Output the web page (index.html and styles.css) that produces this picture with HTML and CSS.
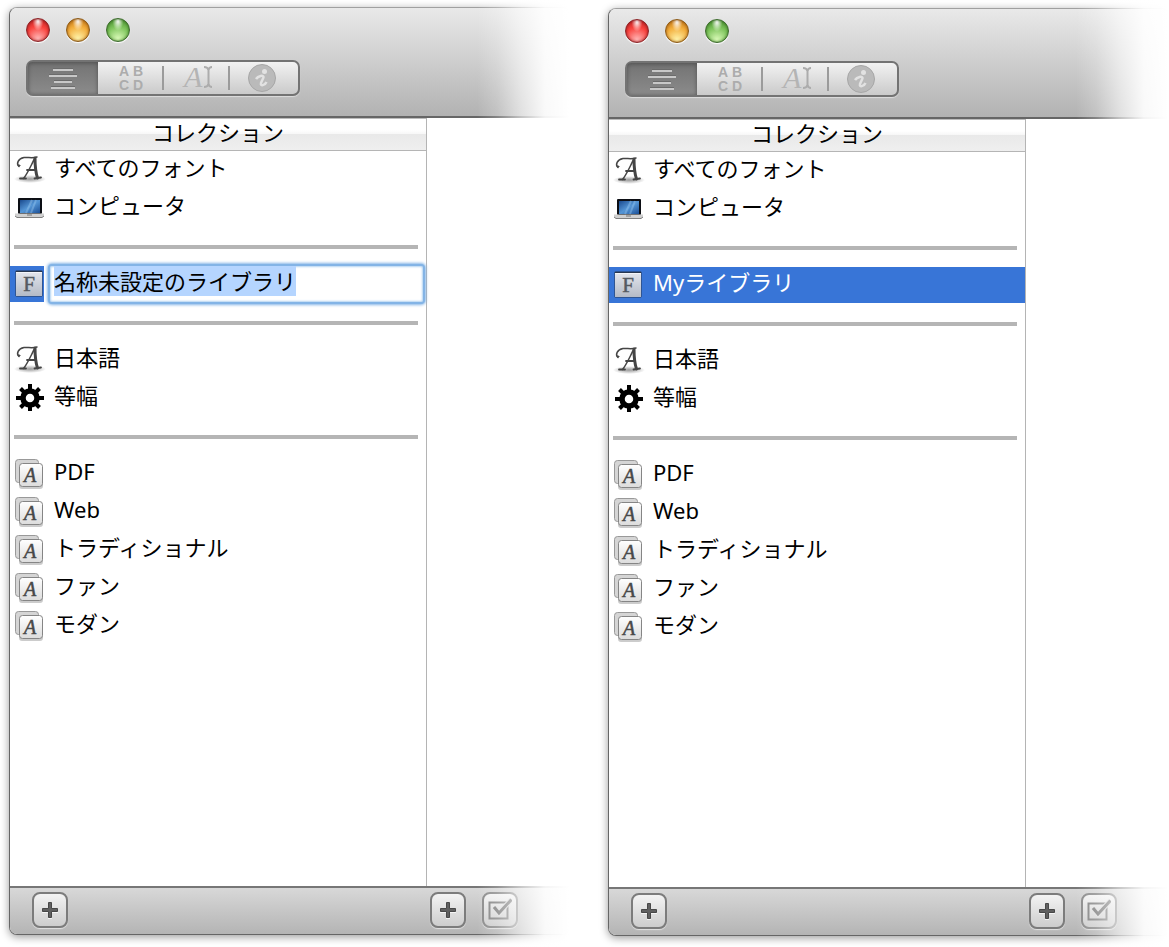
FILE: index.html
```html
<!DOCTYPE html>
<html lang="ja">
<head>
<meta charset="utf-8">
<title>コレクション</title>
<meta name="viewport" content="width=device-width, initial-scale=1">
<link rel="stylesheet" href="styles.css">
</head>
<body>
<svg class="defs" aria-hidden="true">
  <defs>
    <linearGradient id="paper" x1="0" y1="0" x2="0" y2="1"><stop offset="0" stop-color="#fff"/><stop offset="1" stop-color="#dcdcdc"/></linearGradient>
    <linearGradient id="steel" x1="0" y1="0" x2="0" y2="1"><stop offset="0" stop-color="#e2e5ec"/><stop offset="1" stop-color="#b4bac6"/></linearGradient>
    <linearGradient id="screen" x1="0" y1="0" x2="1" y2="1"><stop offset="0" stop-color="#1a4a8e"/><stop offset=".5" stop-color="#5596d6"/><stop offset="1" stop-color="#1c5097"/></linearGradient>
    <radialGradient id="ground"><stop offset="0" stop-color="#000" stop-opacity=".4"/><stop offset="1" stop-color="#000" stop-opacity="0"/></radialGradient>
  </defs>
  <symbol id="script-a" viewBox="0 0 28 28" overflow="visible">
    <ellipse cx="15" cy="23" rx="16" ry="4" fill="url(#ground)"/>
    <g fill="none" stroke="#454545" stroke-linecap="round" stroke-linejoin="round">
      <path d="M4 10.500C1 8 3 2.500 9 1.500C13 1 17 2.500 22 1" stroke-width="1.500"/>
      <circle cx="4" cy="9.500" r=".8"/>
      <path d="M20 2C17 7 13 17 8.500 22.500" stroke-width="1.500"/>
      <path d="M20 2C20 9 20.500 16 22.500 22" stroke-width="3"/>
      <path d="M12 14H21M5 22.500H11M19.500 22.500L26 21.500" stroke-width="1.800"/>
    </g>
  </symbol>
  <symbol id="laptop" viewBox="0 0 28 28" overflow="visible">
    <rect x="3" y="4" width="24" height="16" rx="1" fill="#0c0e14"/>
    <rect x="5" y="6" width="20" height="13" fill="url(#screen)"/>
    <path d="M17 6L11 19M21 6L16 19" stroke="#a7d2f5" stroke-width="2" opacity=".35"/>
    <path d="M0 19.500H29V22L27 23.500H2L0 22Z" fill="#d0d0d0"/>
    <path d="M0 22L2 23.500H27L29 22" fill="none" stroke="#808080"/>
    <path d="M12 21H17" stroke="#777"/>
  </symbol>
  <symbol id="library" viewBox="0 0 28 28">
    <rect x=".5" y=".5" width="27" height="26" rx="1" fill="#273750"/>
    <rect x="1" y="2" width="26" height="24" fill="url(#steel)"/>
    <path d="M1 2.500H27" stroke="#f3f5f9"/>
  </symbol>
  <symbol id="gear" viewBox="0 0 28 28" overflow="visible">
    <g transform="translate(1 0)">
      <circle cx="14" cy="14" r="7" fill="none" stroke="#000" stroke-width="5.500"/>
      <path d="M14 0V6M14 22V27M0 14H6M22 14H28M4.500 4.500L8 8M20 20L23.500 23.500M4.500 23.500L8 20M20 8L23.500 4.500" stroke="#000" stroke-width="4"/>
    </g>
  </symbol>
  <symbol id="stack" viewBox="0 0 28 28" overflow="visible">
    <rect x=".5" y="-.5" width="23" height="23" rx="3" fill="#d5d5d5" stroke="#999"/>
    <rect x="4" y="5" width="24" height="24" rx="3" fill="#000" opacity=".2"/>
    <rect x="4.500" y="3.500" width="23" height="23" rx="3" fill="url(#paper)" stroke="#858585"/>
  </symbol>
  <symbol id="outline" viewBox="0 0 32 24"><path d="M6 4H26M2 10H30M7 16H25M4 22H28" stroke="#6b6b6b" stroke-width="2" transform="translate(0 -1)"/><path d="M6 4H26M2 10H30M7 16H25M4 22H28" stroke="#c8c8c8" stroke-width="2"/></symbol>
  <symbol id="caret" viewBox="0 0 32 28">
    <path d="M23 3C26 3 27 4 27.500 6C28 4 29 3 31 3M27.500 6V20M23 23C26 23 27 22 27.500 20C28 22 29 23 31 23" fill="none" stroke="#acacac" stroke-width="2"/>
  </symbol>
  <symbol id="info" viewBox="0 0 28 28">
    <circle cx="14" cy="14" r="13.500" fill="#bababa" stroke="#a6a6a6"/>
    <circle cx="16.500" cy="7.500" r="2.500" fill="#e2e2e2"/>
    <path d="M8 15C10 12 16 10.500 15.500 13.500L13 19C12 22.500 17 21.500 18.500 18" fill="none" stroke="#e2e2e2" stroke-width="2.500"/>
  </symbol>
  <symbol id="plus" viewBox="0 0 24 24"><path d="M10.500 4.500H13.500V10.500H19.500V13.500H13.500V19.500H10.500V13.500H4.500V10.500H10.500Z" fill="#606060" stroke="#484848"/><path d="M4 14.500H10M10 20.500H14M14 14.500H20" fill="none" stroke="#fff" opacity=".7"/></symbol>
  <symbol id="check" viewBox="0 0 24 24"><path d="M1.500 4.500H19.500V20.500H1.500Z" fill="none" stroke="#858585" stroke-width="2"/><path d="M6 9L11 15L23.500 1.500" fill="none" stroke="#e0e0e0" stroke-width="5"/><path d="M6 9L11 15L23.500 1.500" fill="none" stroke="#818181" stroke-width="3"/></symbol>
</svg>

<main class="stage">
  <section class="window" aria-label="名称未設定のライブラリ">
    <header class="titlebar">
      <div class="lights">
        <button class="light red" aria-label="閉じる"></button>
        <button class="light amber" aria-label="しまう"></button>
        <button class="light green" aria-label="拡大"></button>
      </div>
      <div class="segments">
        <button class="segment active" aria-label="リスト"><svg width="32" height="24"><use href="#outline"/></svg></button>
        <button class="segment" aria-label="サンプル"><span class="letters"><span>A</span><span>B</span><span>C</span><span>D</span></span></button>
        <button class="segment" aria-label="カスタム"><svg width="32" height="28"><use href="#caret"/><text x="3" y="23" class="type-a">A</text></svg></button>
        <button class="segment" aria-label="情報"><svg width="28" height="28"><use href="#info"/></svg></button>
      </div>
    </header>
    <div class="content">
      <nav class="sidebar">
        <h2 class="heading">コレクション</h2>
        <ul class="list">
          <li><button class="row"><svg class="icon"><use href="#script-a"/></svg><span class="label">すべてのフォント</span></button></li>
          <li><button class="row"><svg class="icon"><use href="#laptop"/></svg><span class="label">コンピュータ</span></button></li>
          <li class="divider"><hr></li>
          <li class="row editing"><span class="marker"><svg class="icon"><use href="#library"/><text x="14" y="21" class="icon-f">F</text></svg></span><input class="rename" type="text" value="名称未設定のライブラリ" aria-label="ライブラリの名称" spellcheck="false"></li>
          <li class="divider"><hr></li>
          <li><button class="row"><svg class="icon"><use href="#script-a"/></svg><span class="label">日本語</span></button></li>
          <li><button class="row"><svg class="icon"><use href="#gear"/></svg><span class="label">等幅</span></button></li>
          <li class="divider"><hr></li>
          <li><button class="row"><svg class="icon"><use href="#stack"/><text x="15" y="22" class="icon-a">A</text></svg><span class="label">PDF</span></button></li>
          <li><button class="row"><svg class="icon"><use href="#stack"/><text x="15" y="22" class="icon-a">A</text></svg><span class="label">Web</span></button></li>
          <li><button class="row"><svg class="icon"><use href="#stack"/><text x="15" y="22" class="icon-a">A</text></svg><span class="label">トラディショナル</span></button></li>
          <li><button class="row"><svg class="icon"><use href="#stack"/><text x="15" y="22" class="icon-a">A</text></svg><span class="label">ファン</span></button></li>
          <li><button class="row"><svg class="icon"><use href="#stack"/><text x="15" y="22" class="icon-a">A</text></svg><span class="label">モダン</span></button></li>
        </ul>
      </nav>
    </div>
    <footer class="bottombar">
      <div class="group first"><button class="tool" aria-label="コレクションを追加"><svg width="24" height="24"><use href="#plus"/></svg></button></div>
      <div class="group"><button class="tool" aria-label="フォントを追加"><svg width="24" height="24"><use href="#plus"/></svg></button><button class="tool dim" aria-label="使用停止" disabled><svg width="24" height="24"><use href="#check"/></svg></button></div>
    </footer>
  </section>

  <section class="window lower" aria-label="Myライブラリ">
    <header class="titlebar">
      <div class="lights">
        <button class="light red" aria-label="閉じる"></button>
        <button class="light amber" aria-label="しまう"></button>
        <button class="light green" aria-label="拡大"></button>
      </div>
      <div class="segments">
        <button class="segment active" aria-label="リスト"><svg width="32" height="24"><use href="#outline"/></svg></button>
        <button class="segment" aria-label="サンプル"><span class="letters"><span>A</span><span>B</span><span>C</span><span>D</span></span></button>
        <button class="segment" aria-label="カスタム"><svg width="32" height="28"><use href="#caret"/><text x="3" y="23" class="type-a">A</text></svg></button>
        <button class="segment" aria-label="情報"><svg width="28" height="28"><use href="#info"/></svg></button>
      </div>
    </header>
    <div class="content">
      <nav class="sidebar">
        <h2 class="heading">コレクション</h2>
        <ul class="list">
          <li><button class="row"><svg class="icon"><use href="#script-a"/></svg><span class="label">すべてのフォント</span></button></li>
          <li><button class="row"><svg class="icon"><use href="#laptop"/></svg><span class="label">コンピュータ</span></button></li>
          <li class="divider"><hr></li>
          <li><button class="row selected"><svg class="icon"><use href="#library"/><text x="14" y="21" class="icon-f">F</text></svg><span class="label">Myライブラリ</span></button></li>
          <li class="divider"><hr></li>
          <li><button class="row"><svg class="icon"><use href="#script-a"/></svg><span class="label">日本語</span></button></li>
          <li><button class="row"><svg class="icon"><use href="#gear"/></svg><span class="label">等幅</span></button></li>
          <li class="divider"><hr></li>
          <li><button class="row"><svg class="icon"><use href="#stack"/><text x="15" y="22" class="icon-a">A</text></svg><span class="label">PDF</span></button></li>
          <li><button class="row"><svg class="icon"><use href="#stack"/><text x="15" y="22" class="icon-a">A</text></svg><span class="label">Web</span></button></li>
          <li><button class="row"><svg class="icon"><use href="#stack"/><text x="15" y="22" class="icon-a">A</text></svg><span class="label">トラディショナル</span></button></li>
          <li><button class="row"><svg class="icon"><use href="#stack"/><text x="15" y="22" class="icon-a">A</text></svg><span class="label">ファン</span></button></li>
          <li><button class="row"><svg class="icon"><use href="#stack"/><text x="15" y="22" class="icon-a">A</text></svg><span class="label">モダン</span></button></li>
        </ul>
      </nav>
    </div>
    <footer class="bottombar">
      <div class="group first"><button class="tool" aria-label="コレクションを追加"><svg width="24" height="24"><use href="#plus"/></svg></button></div>
      <div class="group"><button class="tool" aria-label="フォントを追加"><svg width="24" height="24"><use href="#plus"/></svg></button><button class="tool dim" aria-label="使用停止" disabled><svg width="24" height="24"><use href="#check"/></svg></button></div>
    </footer>
  </section>
</main>
<script src="main.js"></script>
</body>
</html>
```
FILE: styles.css
```css
* { box-sizing: border-box; }

:root { --sidebar: 417px; }

body {
  margin: 0;
  background: #fff;
  color: #000;
  font: 22px/30px "Noto Sans", "Noto Sans CJK JP", sans-serif;
  overflow-x: hidden;
}

button {
  margin: 0;
  padding: 0;
  border: 0;
  background: none;
  color: inherit;
  font: inherit;
}

.defs { position: absolute; width: 0; height: 0; }

.icon-f, .icon-a, .type-a { font-family: "Liberation Serif", serif; }
.icon-f { font-size: 21px; fill: #555a62; stroke: #555a62; text-anchor: middle; stroke-width: 0.5; }
.icon-a { font-size: 20px; font-style: italic; fill: #484848; stroke: #484848; text-anchor: middle; stroke-width: 0.5; }
.type-a { font-size: 30px; font-style: italic; fill: #b4b4b4; }

.letters {
  display: grid;
  grid-template-columns: 14px 14px;
  color: #acacac;
  font: 700 14px/14px "Liberation Sans", sans-serif;
  text-align: center;
}

.stage {
  display: grid;
  grid-template-columns: 1fr 1fr;
  gap: 38px;
  min-height: 100vh;
  padding: 7px 0 11px 9px;
}

.window {
  position: relative;
  display: flex;
  flex-direction: column;
  margin-bottom: 1px;
  min-width: 0;
  border: 1px solid #666;
  border-top-color: #a0a0a0;
  border-radius: 8px;
  background: #fff;
  box-shadow: 0 2px 9px rgba(0, 0, 0, .4);
}

.window.lower { margin: 1px 0 0; }

/* The right side of each window dissolves into the page. */
.window::after {
  content: "";
  position: absolute;
  inset: -12px -20px -20px auto;
  width: 112px;
  pointer-events: none;
  background: linear-gradient(to right, rgba(255,255,255,0), rgba(255,255,255,.2) 20px, rgba(255,255,255,.6) 44px, rgba(255,255,255,.92) 68px, #fff 92px);
}

.titlebar {
  padding: 10px 16px 20px;
  border-bottom: 2px solid #666;
  border-radius: 7px 7px 0 0;
  background: linear-gradient(#e9e9e9, #b2b2b2);
}

.lights { display: flex; gap: 16px; margin-bottom: 18px; }

.light {
  width: 24px;
  height: 24px;
  border: 1px solid;
  border-radius: 50%;
}

.red {
  border-color: #8c2326;
  background: radial-gradient(ellipse at 50% 8%, #fff 0, rgba(255,255,255,0) 35%), radial-gradient(circle at 50% 90%, #ffb8b8, #f9433e 55%, #b51d20);
  box-shadow: inset 0 0 3px #8c1518, 0 1px 1px #fff;
}

.amber {
  border-color: #8d5a16;
  background: radial-gradient(ellipse at 50% 8%, #fff 0, rgba(255,255,255,0) 35%), radial-gradient(circle at 50% 90%, #fff5ac, #f3ae3c 55%, #b96a10);
  box-shadow: inset 0 0 3px #945510, 0 1px 1px #fff;
}

.green {
  border-color: #3c6b2c;
  background: radial-gradient(ellipse at 50% 8%, #fff 0, rgba(255,255,255,0) 35%), radial-gradient(circle at 50% 90%, #dbfbb9, #7cc35a 55%, #3f8529);
  box-shadow: inset 0 0 3px #36701f, 0 1px 1px #fff;
}

.segments {
  display: grid;
  grid-template-columns: 70px 66px 66px 68px;
  width: max-content;
  height: 36px;
  border: 2px solid #737373;
  border-radius: 7px;
  background: linear-gradient(#f2f2f2, #cacaca);
  box-shadow: 0 1px 1px #ddd;
}

.segment {
  position: relative;
  display: grid;
  place-items: center;
}

.segment:last-child { padding-right: 4px; }

.segment.active {
  border-radius: 4px 0 0 4px;
  background: linear-gradient(#737373, #8b8b8b);
  box-shadow: inset 0 1px 4px #505050;
}

.segment:nth-child(n+3)::before {
  content: "";
  position: absolute;
  left: -2px;
  top: 4px;
  width: 2px;
  height: 24px;
  background: #9b9b9b;
}

.content { flex: 1; display: flex; }

.sidebar {
  width: var(--sidebar);
  border-right: 1px solid #b4b4b4;
}

.heading {
  margin: 0 0 1px;
  height: 33px;
  border-top: 1px solid #bcbcbc;
  border-bottom: 1px solid #b5b5b5;
  background: linear-gradient(#fff 35%, #f7f7f7 48%, #e9e9e9 50%, #efefef);
  font-size: 22px;
  font-weight: 400;
  line-height: 26px;
  text-align: center;
}

.list {
  display: grid;
  gap: 2px;
  margin: 0;
  padding: 0;
  list-style: none;
}

.row {
  display: flex;
  align-items: center;
  gap: 11px;
  width: 100%;
  height: 36px;
  padding-left: 5px;
  text-align: left;
}

.icon { flex: none; width: 28px; height: 28px; overflow: visible; }
.label { padding-bottom: 6px; }

.selected { background: #3875d7; color: #fff; }

.divider { display: flex; align-items: center; height: 36px; padding: 2px 8px 0 4px; }
.divider hr { flex: 1; height: 4px; margin: 0; border: 0; background: #b5b5b5; }

.editing { gap: 4px; padding: 0 1px 0 0; }

.marker {
  display: flex;
  align-items: center;
  width: 34px;
  height: 36px;
  padding-left: 5px;
  background: #3875d7;
}

.rename {
  flex: 1;
  min-width: 0;
  height: 40px;
  padding: 0 4px 8px;
  border: 2px solid #83b4e6;
  border-radius: 4px;
  outline: 0;
  background: #fff;
  box-shadow: 0 0 3px 1px #83b4e6, inset 0 0 2px 1px #b4d4f2;
  color: #000;
  font: inherit;
}

.rename::selection { background: #b5d5ff; color: #000; }

.bottombar {
  display: grid;
  grid-template-columns: var(--sidebar) 1fr;
  align-items: center;
  height: 48px;
  padding-bottom: 2px;
  border-top: 2px solid #777;
  border-radius: 0 0 7px 7px;
  background: linear-gradient(#d8d8d8, #b4b4b4);
}

.group { display: flex; gap: 16px; padding-left: 3px; }
.group.first { padding-left: 22px; }

.tool {
  display: grid;
  place-items: center;
  width: 36px;
  height: 36px;
  border: 2px solid #7c7c7c;
  border-radius: 8px;
  background: linear-gradient(#f3f3f3, #cdcdcd);
  box-shadow: 0 1px 1px #e2e2e2;
}

.dim { border-color: #8c8c8c; }
```
FILE: main.js
```js
const field = document.querySelector(".rename");
field.focus({ preventScroll: true });
field.select();
```
